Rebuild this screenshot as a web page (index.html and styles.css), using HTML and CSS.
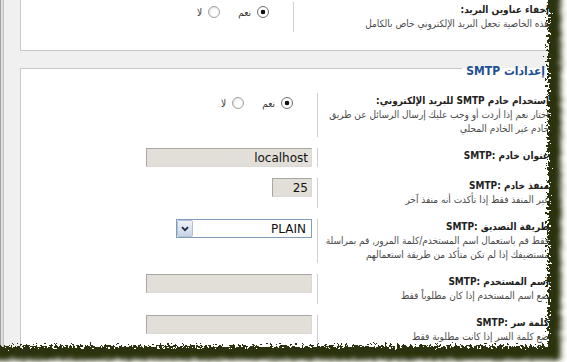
FILE: index.html
```html
<!DOCTYPE html>
<html lang="ar" dir="rtl">
<head>
    <meta charset="UTF-8">
    <meta name="viewport" content="width=device-width, initial-scale=1.0">
    <title>إعدادات البريد</title>
    <link rel="stylesheet" href="styles.css">
</head>
<body>
    <div class="frame">
        <div class="main">
            <div class="box box-cut">
                <div class="row">
                    <div class="label">
                        <strong>إخفاء عناوين البريد:</strong>
                        <span class="desc">هذه الخاصية تجعل البريد الإلكتروني خاص بالكامل</span>
                    </div>
                    <div class="value choices">
                        <label class="opt"><input type="radio" name="hidemail" checked>نعم</label>
                        <label class="opt"><input type="radio" name="hidemail">لا</label>
                    </div>
                </div>
            </div>

            <fieldset class="box">
                <legend>إعدادات SMTP</legend>

                <div class="row">
                    <div class="label">
                        <strong>استخدام خادم SMTP للبريد الإلكتروني:</strong>
                        <span class="desc">اختار نعم إذا أردت أو وجب عليك إرسال الرسائل عن طريق<br>خادم غير الخادم المحلي</span>
                    </div>
                    <div class="value choices">
                        <label class="opt"><input type="radio" name="usesmtp" checked>نعم</label>
                        <label class="opt"><input type="radio" name="usesmtp">لا</label>
                    </div>
                </div>

                <div class="row">
                    <div class="label">
                        <strong>عنوان خادم SMTP:&lrm;</strong>
                    </div>
                    <div class="value">
                        <input class="field" type="text" value="localhost">
                    </div>
                </div>

                <div class="row">
                    <div class="label">
                        <strong>منفذ خادم SMTP:&lrm;</strong>
                        <span class="desc">غير المنفذ فقط إذا تأكدت أنه منفذ آخر</span>
                    </div>
                    <div class="value">
                        <input class="field field-short" type="text" value="25">
                    </div>
                </div>

                <div class="row">
                    <div class="label">
                        <strong>طريقة التصديق SMTP:&lrm;</strong>
                        <span class="desc">فقط قم باستعمال اسم المستخدم/كلمة المرور, قم بمراسلة<br>مستضيفك إذا لم تكن متأكد من طريقة استعمالهم</span>
                    </div>
                    <div class="value">
                        <div class="select">
                            <select>
                                <option>PLAIN</option>
                                <option>LOGIN</option>
                                <option>CRAM-MD5</option>
                            </select>
                            <span class="arrow">
                                <svg width="8" height="6" viewBox="0 0 8 6"><path d="M1 1.2 L4 4.2 L7 1.2" fill="none" stroke="#1e2a44" stroke-width="1.8"/></svg>
                            </span>
                        </div>
                    </div>
                </div>

                <div class="row">
                    <div class="label">
                        <strong>اسم المستخدم SMTP:&lrm;</strong>
                        <span class="desc">ضع اسم المستخدم إذا كان مطلوباً فقط</span>
                    </div>
                    <div class="value">
                        <input class="field" type="text" value="">
                    </div>
                </div>

                <div class="row">
                    <div class="label">
                        <strong>كلمة سر SMTP:&lrm;</strong>
                        <span class="desc">ضع كلمة السر إذا كانت مطلوبة فقط</span>
                    </div>
                    <div class="value">
                        <input class="field" type="password" value="">
                    </div>
                </div>
            </fieldset>
        </div>
    </div>

    <!-- torn paper edge of the screenshot -->
    <svg class="torn" width="567" height="362" viewBox="0 0 567 362">
        <defs>
            <filter id="rough" x="-5%" y="-5%" width="110%" height="110%">
                <feTurbulence type="fractalNoise" baseFrequency="0.4" numOctaves="3" seed="7" result="noise"/>
                <feDisplacementMap in="SourceGraphic" in2="noise" scale="14" xChannelSelector="R" yChannelSelector="G"/>
            </filter>
            <filter id="shade" x="-5%" y="-5%" width="110%" height="110%">
                <feTurbulence type="fractalNoise" baseFrequency="0.4" numOctaves="3" seed="7" result="noise"/>
                <feDisplacementMap in="SourceGraphic" in2="noise" scale="14" xChannelSelector="R" yChannelSelector="G" result="torn"/>
                <feGaussianBlur in="torn" stdDeviation="2.4"/>
            </filter>
            <mask id="outside" maskUnits="userSpaceOnUse" x="0" y="0" width="567" height="362">
                <rect width="567" height="362" fill="#fff"/>
                <rect x="-20" y="-20" width="568" height="366" fill="#000" filter="url(#rough)"/>
            </mask>
        </defs>
        <g mask="url(#outside)">
            <rect width="567" height="362" fill="#fff"/>
            <rect x="-16" y="-16" width="577" height="376" fill="#2b300c" filter="url(#shade)"/>
            <rect x="-16" y="-16" width="570" height="369" fill="#2b300c" filter="url(#shade)"/>
        </g>
    </svg>
</body>
</html>
```

FILE: styles.css
```css
body {
    margin: 0;
    font-family: "DejaVu Sans Condensed", "DejaVu Sans", sans-serif;
    font-size: 10px;
    color: #333;
    background: #fff;
}
.frame {
    height: 100vh;
    overflow: hidden;
    border-left: 1px solid #a3a3a3;
    padding-left: 2px;
    background: #dedede;
}
.main {
    height: 100%;
    border-left: 1px solid #c4c4c4;
    background: #f0f0f0;
    padding: 0 7px 0 16px;
}
.box {
    background: #fff;
    border: 1px solid #c8c8c8;
}
.box-cut {
    border-top: none;
    padding: 2px 10px 18px 0;
}
fieldset.box {
    margin: 6px 0 0;
    padding: 14px 10px 20px 0;
    min-width: 0;
}
legend {
    padding: 7px 4px 0;
    font-size: 12px;
    font-weight: bold;
    line-height: 15px;
    color: #1d4f91;
}
.row {
    display: grid;
    grid-template-columns: 256px 1fr;
    margin-bottom: 11px;
}
.box-cut .row {
    margin-bottom: 0;
}
fieldset .row {
    grid-template-columns: 232px 1fr;
}
.label {
    border-left: 1px solid #cfcfcf;
    padding: 1px 0;
    line-height: 14px;
    white-space: nowrap;
}
.label strong {
    display: block;
    color: #222;
}
.desc {
    display: block;
    color: #4a4a4a;
}
.value {
    display: flex;
    align-items: flex-start;
    padding-right: 5px;
}
.choices {
    padding-right: 24px;
    padding-top: 4px;
}
.opt {
    display: flex;
    align-items: center;
    gap: 6px;
    margin-left: 18px;
    color: #333;
}
.opt input[type="radio"] {
    appearance: none;
    margin: 0;
    width: 12px;
    height: 12px;
    border: 1px solid #a2a2a2;
    border-radius: 50%;
    background: radial-gradient(circle at 60% 60%, #fff 0 3px, #e8e8e8 6px);
}
.opt input[type="radio"]:checked {
    border-color: #6d6d6d;
    background: radial-gradient(circle, #111 0 2px, #fff 2.6px);
}
.field {
    box-sizing: border-box;
    width: 166px;
    height: 19px;
    margin: 0;
    border: 1px solid;
    border-color: #a9a7a3 #dcd9d4 #dcd9d4 #a9a7a3;
    background: #e2dfd9;
    font: 12px "DejaVu Sans", sans-serif;
    color: #111;
    text-align: right;
    padding: 0 3px;
}
.field-short {
    width: 40px;
}
.select {
    position: relative;
    width: 136px;
    height: 19px;
}
.select select {
    appearance: none;
    box-sizing: border-box;
    width: 100%;
    height: 100%;
    margin: 0;
    border: 1px solid #7f9db9;
    background: #fff;
    font: 12px "DejaVu Sans", sans-serif;
    color: #111;
    padding: 0 5px 0 20px;
}
.arrow {
    position: absolute;
    left: 1px;
    top: 1px;
    box-sizing: border-box;
    width: 16px;
    height: 17px;
    border: 1px solid #b3c0d6;
    border-radius: 2px;
    background: linear-gradient(#eef2f8, #c9d3e3);
    display: flex;
    align-items: center;
    justify-content: center;
    pointer-events: none;
}
.torn {
    position: absolute;
    top: 0;
    left: 0;
    pointer-events: none;
}
```
